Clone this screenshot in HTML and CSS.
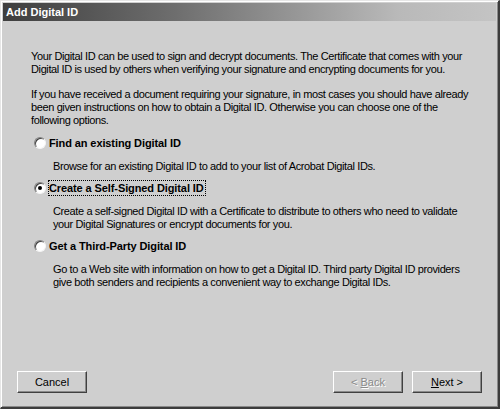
FILE: index.html
```html
<html lang="en">
  <head>
    <title>Add Digital ID</title>
    <meta charset="utf-8">
    <link rel="stylesheet" href="styles.css">
  </head>

  <body>
    <div class="window">
      <div class="titlebar">Add Digital ID</div>

      <div class="content">
        <p class="intro">Your Digital ID can be used to sign and decrypt documents. The Certificate that comes with your<br>Digital ID is used by others when verifying your signature and encrypting documents for you.</p>
        <p class="intro">If you have received a document requiring your signature, in most cases you should have already<br>been given instructions on how to obtain a Digital ID. Otherwise you can choose one of the<br>following options.</p>

        <ul class="options">
          <li class="option">
            <div class="option__head">
              <span class="radio"></span>
              <span class="option__label">Find an existing Digital ID</span>
            </div>
            <p class="option__desc">Browse for an existing Digital ID to add to your list of Acrobat Digital IDs.</p>
          </li>
          <li class="option">
            <div class="option__head">
              <span class="radio radio--checked"></span>
              <span class="option__label option__label--focus">Create a Self-Signed Digital ID</span>
            </div>
            <p class="option__desc">Create a self-signed Digital ID with a Certificate to distribute to others who need to validate<br>your Digital Signatures or encrypt documents for you.</p>
          </li>
          <li class="option">
            <div class="option__head">
              <span class="radio"></span>
              <span class="option__label">Get a Third-Party Digital ID</span>
            </div>
            <p class="option__desc">Go to a Web site with information on how to get a Digital ID. Third party Digital ID providers<br>give both senders and recipients a convenient way to exchange Digital IDs.</p>
          </li>
        </ul>
      </div>

      <div class="buttons">
        <button class="btn">Cancel</button>
        <div class="buttons__nav">
          <button class="btn btn--disabled">&lt; <u>B</u>ack</button>
          <button class="btn"><u>N</u>ext &gt;</button>
        </div>
      </div>
    </div>
  </body>
</html>
```

FILE: styles.css
```css
html, body {
  margin: 0;
  padding: 0;
}

body {
  width: 500px;
  height: 409px;
  background-color: #cfcfcf;
  font-family: "Liberation Sans", Arial, sans-serif;
  font-size: 11px;
  color: #000;
}

.window {
  box-sizing: border-box;
  width: 500px;
  height: 409px;
  display: flex;
  flex-direction: column;
  padding: 2px;
  background-color: #cfcfcf;
  border-top: 1px solid #e6e6e6;
  border-left: 1px solid #e6e6e6;
  border-right: 2px solid #3c3c3c;
  border-bottom: 2px solid #3c3c3c;
  box-shadow: inset 1px 1px 0 #ffffff, inset -1px -1px 0 #8a8a8a;
}

.titlebar {
  height: 18px;
  line-height: 18px;
  padding-left: 3px;
  font-weight: bold;
  color: #fff;
  background: linear-gradient(to right, #3e3e3e 0%, #6e6e6e 35%, #b9b9b9 80%, #c4c4c4 100%);
}

.content {
  flex: 1;
  display: flex;
  flex-direction: column;
  padding: 29px 0 0 28px;
}

.intro {
  margin: 0;
  line-height: 13px;
  letter-spacing: -0.38px;
}

.intro + .intro {
  margin-top: 12px;
}

.options {
  list-style-type: none;
  margin: 7px 0 0 0;
  padding: 0;
  display: flex;
  flex-direction: column;
  gap: 6px;
}

.option__head {
  display: flex;
  align-items: center;
  height: 17px;
  padding-left: 3px;
}

.radio {
  box-sizing: border-box;
  width: 12px;
  height: 12px;
  border-radius: 50%;
  background-color: #fff;
  border-top: 1px solid #808080;
  border-left: 1px solid #808080;
  border-right: 1px solid #f4f4f4;
  border-bottom: 1px solid #f4f4f4;
  box-shadow: inset 1px 1px 0 #404040;
  display: flex;
  align-items: center;
  justify-content: center;
}

.radio--checked::after {
  content: "";
  width: 4px;
  height: 4px;
  border-radius: 50%;
  background-color: #000;
}

.option__label {
  margin-left: 2px;
  padding: 1px 1px 1px 0;
  font-weight: bold;
  border: 1px solid transparent;
  letter-spacing: -0.1px;
}

.option__label--focus {
  border: 1px dotted #000;
}

.option__desc {
  margin: 9px 0 0 22px;
  line-height: 13px;
  letter-spacing: -0.38px;
}

.buttons {
  display: flex;
  justify-content: space-between;
  padding: 0 14px 12px 14px;
}

.buttons__nav {
  display: flex;
  gap: 9px;
}

.btn {
  box-sizing: border-box;
  width: 70px;
  height: 22px;
  padding: 0;
  font-family: "Liberation Sans", Arial, sans-serif;
  font-size: 11px;
  color: #000;
  background-color: #cfcfcf;
  border-top: 1px solid #fff;
  border-left: 1px solid #fff;
  border-right: 1px solid #404040;
  border-bottom: 1px solid #404040;
  box-shadow: inset -1px -1px 0 #8a8a8a;
}

.btn--disabled {
  color: #8a8a8a;
  text-shadow: 1px 1px 0 #fff;
}
```
